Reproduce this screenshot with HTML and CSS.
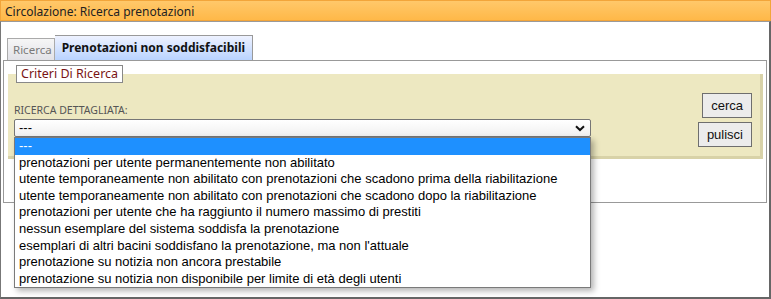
FILE: index.html
```html
<!DOCTYPE html>
<html lang="it">
<head>
  <meta charset="UTF-8">
  <title>Circolazione: Ricerca prenotazioni</title>
  <link rel="stylesheet" href="styles.css">
</head>
<body>
  <div class="window">
    <div class="titlebar">Circolazione: Ricerca prenotazioni</div>
    <div class="content">
      <div class="tabs">
        <span class="tab">Ricerca</span>
        <span class="tab active">Prenotazioni non soddisfacibili</span>
      </div>
      <div class="tabpanel">
        <fieldset class="criteria">
          <legend>Criteri Di Ricerca</legend>
          <div class="row">
            <div class="field">
              <label>RICERCA DETTAGLIATA:</label>
              <div class="select">
                <span>---</span>
                <svg class="chevron" width="10" height="7" viewBox="0 0 10 7"><path d="M1 1.2 L5 5 L9 1.2" fill="none" stroke="#111" stroke-width="2"/></svg>
                <ul class="options">
                  <li class="selected">---</li>
                  <li>prenotazioni per utente permanentemente non abilitato</li>
                  <li>utente temporaneamente non abilitato con prenotazioni che scadono prima della riabilitazione</li>
                  <li>utente temporaneamente non abilitato con prenotazioni che scadono dopo la riabilitazione</li>
                  <li>prenotazioni per utente che ha raggiunto il numero massimo di prestiti</li>
                  <li>nessun esemplare del sistema soddisfa la prenotazione</li>
                  <li>esemplari di altri bacini soddisfano la prenotazione, ma non l'attuale</li>
                  <li>prenotazione su notizia non ancora prestabile</li>
                  <li>prenotazione su notizia non disponibile per limite di età degli utenti</li>
                </ul>
              </div>
            </div>
            <div class="buttons">
              <button>cerca</button>
              <button>pulisci</button>
            </div>
          </div>
        </fieldset>
      </div>
    </div>
  </div>
</body>
</html>
```

FILE: styles.css
```css
body {
  margin: 0;
  font-family: "Noto Sans", sans-serif;
  background: #fff;
  color: #222;
}
.window {
  width: 771px;
  height: 299px;
  box-sizing: border-box;
}
.titlebar {
  height: 21px;
  box-sizing: border-box;
  padding: 2px 4px 0;
  font-size: 12px;
  line-height: 17px;
  color: #222;
  background: linear-gradient(#ffc86a, #ffb848);
  border: 1px solid #f2a53a;
}
.content {
  height: 278px;
  box-sizing: border-box;
  border: 1px solid #888;
  border-width: 1px 2px 2px 1px;
  border-color: #9a9a9a #666 #666 #777;
  padding: 13px 2px 0 2px;
}
.tabs {
  display: flex;
  align-items: flex-end;
  padding-left: 4px;
  height: 25px;
}
.tab {
  box-sizing: border-box;
  height: 22px;
  padding: 0 2px 0 5px;
  font-size: 11.5px;
  line-height: 22px;
  color: #7a7a7a;
  background: linear-gradient(#f6f6f6, #e2e2e8);
  border: 1px solid #aaa;
  border-bottom: none;
}
.tab.active {
  height: 25px;
  padding: 0 7px 0 7px;
  font-weight: bold;
  font-size: 12px;
  line-height: 24px;
  color: #111;
  background: linear-gradient(#eef2ff, #b9d3ff);
  border-color: #999;
  border-left: none;
}
.tabpanel {
  height: 143px;
  box-sizing: border-box;
  border: 1px solid #999;
  padding: 4px 3px 0 4px;
}
.criteria {
  margin: 0;
  padding: 5px 8px 9px 6px;
  border: none;
  border-right: 3px solid #d8d2a8;
  border-bottom: 3px solid #d8d2a8;
  background: #ede8c1;
  min-width: 0;
}
.criteria legend {
  padding: 0 4px;
  margin-left: 2px;
  font-size: 12.5px;
  line-height: 16px;
  color: #7a1414;
  background: #fff;
  border: 1px solid #888;
}
.row {
  display: flex;
  justify-content: space-between;
  align-items: flex-start;
}
.field {
  padding-top: 16px;
}
.field label {
  display: block;
  font-size: 10.5px;
  line-height: 12px;
  color: #555;
  margin-bottom: 3px;
}
.select {
  position: relative;
  width: 577px;
  height: 18px;
  box-sizing: border-box;
  border: 1px solid #767676;
  border-radius: 2px;
  background: linear-gradient(#fff, #f0f0f0);
  font-family: "Liberation Sans", Arial, sans-serif;
  font-size: 13px;
  line-height: 16px;
  color: #000;
  padding-left: 4px;
}
.chevron {
  position: absolute;
  right: 5px;
  top: 5px;
}
.options {
  position: absolute;
  left: -1px;
  top: 17px;
  width: 577px;
  box-sizing: border-box;
  margin: 0;
  padding: 0;
  list-style: none;
  background: #fff;
  border: 1px solid #7a7a7a;
  box-shadow: 3px 3px 6px rgba(0, 0, 0, 0.3);
  z-index: 2;
}
.options li {
  height: 16.6px;
  line-height: 16.6px;
  padding-left: 4px;
  white-space: nowrap;
}
.options li.selected {
  background: #1e90ff;
  color: #fff;
}
.buttons {
  display: flex;
  flex-direction: column;
  align-items: flex-end;
  gap: 4px;
  padding-top: 5px;
}
.buttons button {
  height: 25px;
  padding: 0 8px;
  font-family: "Liberation Sans", Arial, sans-serif;
  font-size: 13px;
  color: #111;
  background: #ececec;
  border: 1px solid #6e6e6e;
  border-radius: 0;
}
```
